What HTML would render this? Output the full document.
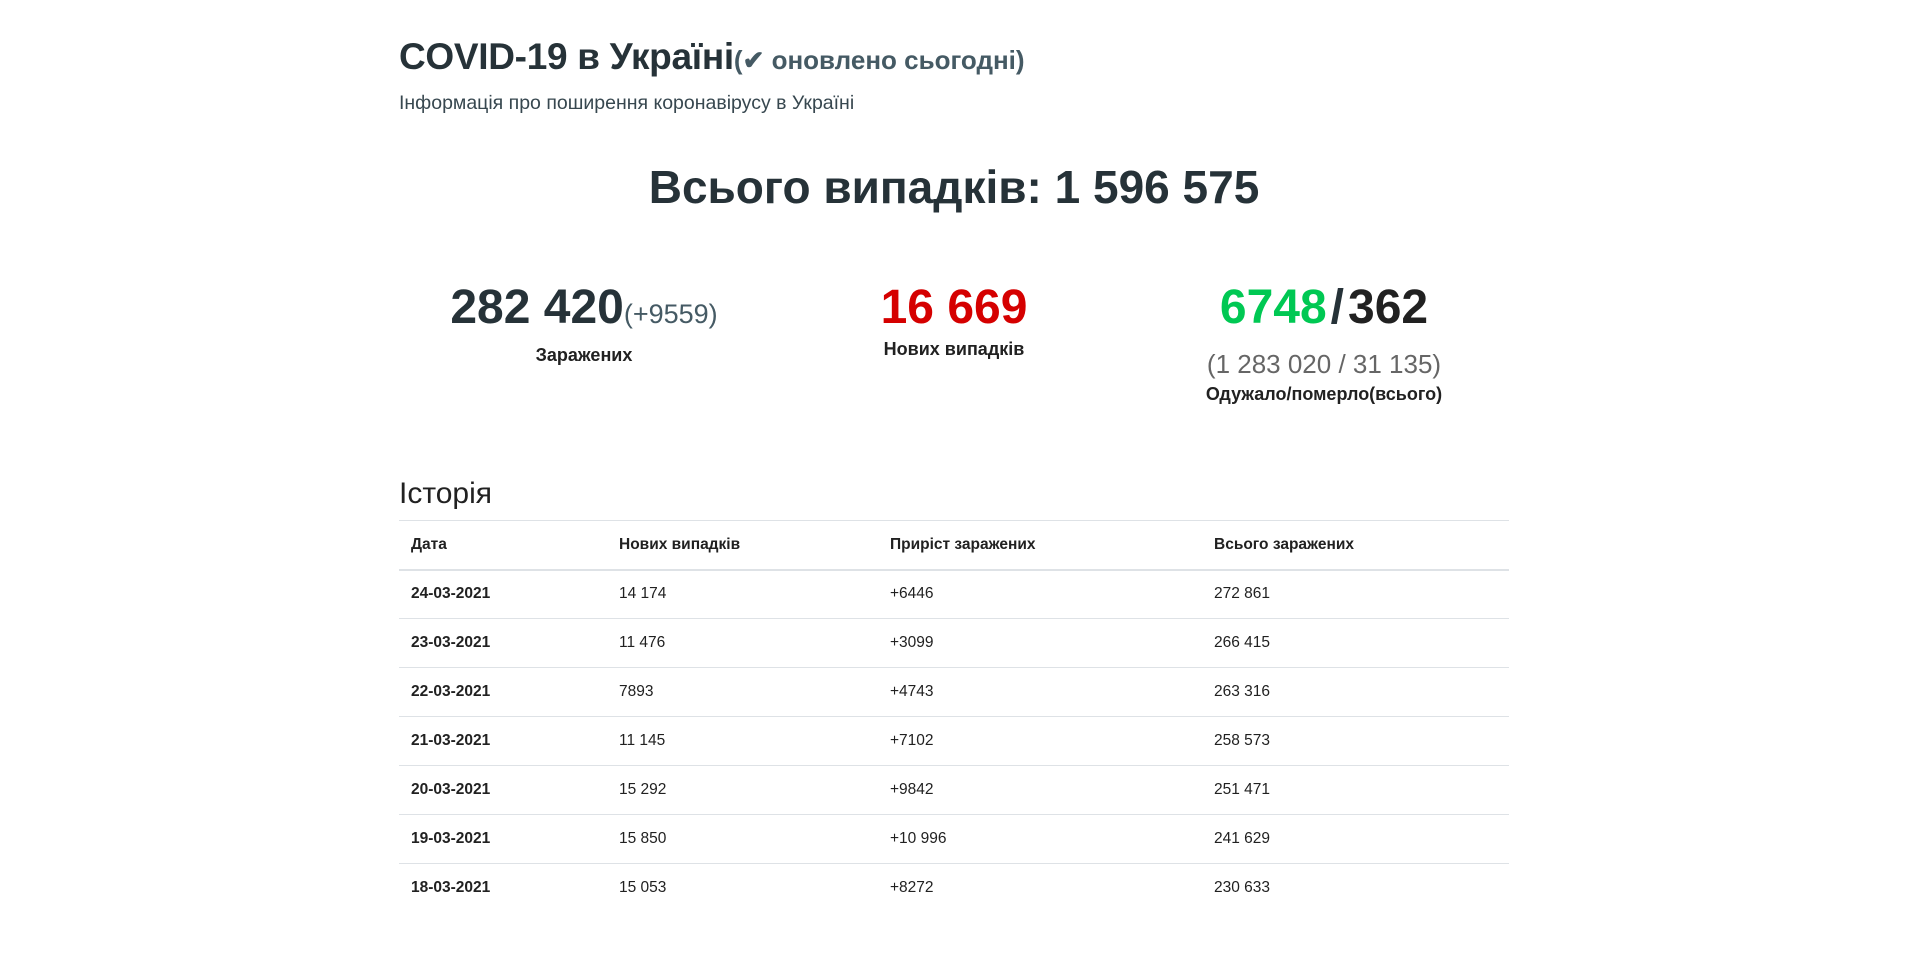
<!DOCTYPE html>
<html><head><meta charset="utf-8"><style>
*{box-sizing:border-box;margin:0;padding:0}
body{width:1908px;height:953px;background:#fff;font-family:"Liberation Sans",sans-serif;color:#263238;overflow:hidden}
.c{position:absolute;left:399px;width:1110px;top:0}
h1{position:absolute;top:33px;left:0;font-size:37px;font-weight:bold;color:#263238;white-space:nowrap;line-height:48px;letter-spacing:-0.3px}
h1 span{font-size:26px;color:#455a64;letter-spacing:0}
.sub{position:absolute;top:92px;left:0;font-size:19.5px;color:#37474f;font-weight:300}
.tot{position:absolute;top:155px;left:0;width:1110px;text-align:center;font-size:46px;font-weight:bold;line-height:64px}
.col{position:absolute;top:280px;width:370px;text-align:center}
.num{font-size:48px;font-weight:bold;line-height:56px;white-space:nowrap}
.num small{font-size:27px;font-weight:normal;color:#455a64}
.lab{font-size:18px;font-weight:bold;color:#212121;margin-top:3px}
.gray{font-size:26px;color:#666;margin-top:12px;line-height:32px}
h2{position:absolute;top:476px;left:0;font-size:30px;font-weight:500;line-height:36px;color:#212121}
table{position:absolute;top:520px;left:0;width:1110px;border-collapse:collapse;font-size:15.5px;color:#212121}
th{text-align:left;font-weight:bold;height:49px;padding:0 12px;border-top:1px solid #dee2e6;border-bottom:2px solid #dee2e6}
td{height:49px;padding:0 12px;border-bottom:1px solid #dee2e6}
tr:last-child td{border-bottom:none}
td:first-child{font-weight:bold}
</style></head><body><div class="c">
<h1>COVID-19 в Україні<span>(✔ оновлено сьогодні)</span></h1>
<div class="sub">Інформація про поширення коронавірусу в Україні</div>
<div class="tot">Всього випадків: 1 596 575</div>
<div class="col" style="left:0"><div class="num">282 420<small>(+9559)</small></div><div class="lab">Заражених</div></div>
<div class="col" style="left:370px"><div class="num" style="color:#d50000">16 669</div><div class="lab">Нових випадків</div></div>
<div class="col" style="left:740px"><div class="num"><span style="color:#00c853">6748</span><span style="margin:0 4px">/</span><span style="color:#212121">362</span></div><div class="gray">(1 283 020 / 31 135)</div><div class="lab" style="margin-top:4px">Одужало/померло(всього)</div></div>
<h2>Історія</h2>
<table>
<tr><th style="width:208px">Дата</th><th style="width:271px">Нових випадків</th><th style="width:324px">Приріст заражених</th><th>Всього заражених</th></tr>
<tr><td>24-03-2021</td><td>14 174</td><td>+6446</td><td>272 861</td></tr>
<tr><td>23-03-2021</td><td>11 476</td><td>+3099</td><td>266 415</td></tr>
<tr><td>22-03-2021</td><td>7893</td><td>+4743</td><td>263 316</td></tr>
<tr><td>21-03-2021</td><td>11 145</td><td>+7102</td><td>258 573</td></tr>
<tr><td>20-03-2021</td><td>15 292</td><td>+9842</td><td>251 471</td></tr>
<tr><td>19-03-2021</td><td>15 850</td><td>+10 996</td><td>241 629</td></tr>
<tr><td>18-03-2021</td><td>15 053</td><td>+8272</td><td>230 633</td></tr>
</table>
</div></body></html>
